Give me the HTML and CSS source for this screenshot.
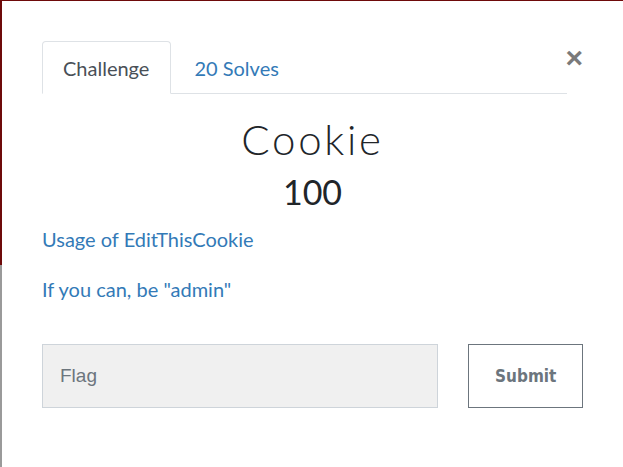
FILE: index.html
```html
<!DOCTYPE html>
<html>
<head>
<meta charset="utf-8">
<link rel="stylesheet" href="styles.css">
</head>
<body>
<div class="modal">
  <div class="head">
    <ul class="tabs">
      <li class="tab active">Challenge</li>
      <li class="tab">20 Solves</li>
    </ul>
    <button class="close">&times;</button>
  </div>
  <h1 class="title">Cookie</h1>
  <div class="value">100</div>
  <p class="desc"><a href="#">Usage of EditThisCookie</a></p>
  <p class="desc"><a href="#">If you can, be "admin"</a></p>
  <form class="submit-row">
    <input class="flag" type="text" placeholder="Flag">
    <button class="submit" type="button">Submit</button>
  </form>
</div>
</body>
</html>
```
FILE: styles.css
```css
html, body {
  margin: 0;
  height: 100%;
}
body {
  background: linear-gradient(to bottom, #6e0a0a 0, #6e0a0a 265px, #9a9a9a 265px, #9a9a9a 100%);
  font-family: Lato, "Open Sans", sans-serif;
  overflow: hidden;
}
.modal {
  margin: 1px 0 0 2px;
  background: #fff;
  height: 466px;
  box-sizing: border-box;
  padding: 40px 40px 0 40px;
}
.head {
  display: flex;
  align-items: flex-start;
}
.tabs {
  list-style: none;
  margin: 0;
  padding: 0;
  display: flex;
  flex: 1;
  min-width: 0;
  border-bottom: 1px solid #dee2e6;
}
.tab {
  font-size: 20px;
  line-height: 24px;
  padding: 14px 21px 13px 20px;
  color: #337ab7;
  border: 1px solid transparent;
  border-radius: 4px 4px 0 0;
  margin-bottom: -1px;
  margin-right: 2px;
}
.tab.active {
  color: #495057;
  border-color: #dee2e6 #dee2e6 #fff;
  background: #fff;
}
.close {
  flex: 0 0 16px;
  width: 16px;
  min-width: 0;
  margin-top: 2px;
  border: 0;
  background: none;
  padding: 0;
  display: flex;
  justify-content: flex-end;
  overflow: visible;
  white-space: nowrap;
  font-size: 30px;
  line-height: 30px;
  font-weight: 700;
  color: #7a7a7a;
  font-family: "Liberation Sans", Arial, sans-serif;
}
.title {
  margin: 20px 0 0 0;
  text-align: center;
  font-weight: 300;
  font-size: 42px;
  line-height: 50px;
  letter-spacing: 2.7px;
  color: #212529;
}
.value {
  text-align: center;
  font-size: 34px;
  line-height: 44px;
  color: #212529;
  margin-top: 6px;
}
.desc {
  margin: 12px 0 0 0;
  font-size: 20px;
  line-height: 26px;
}
.desc + .desc {
  margin-top: 24px;
}
.desc a {
  color: #337ab7;
  text-decoration: none;
}
.submit-row {
  display: flex;
  margin-top: 42px;
}
.flag {
  width: 398px;
  height: 64px;
  box-sizing: border-box;
  background: #f0f0f0;
  border: 1px solid #ced4da;
  padding: 0 17px;
  font-size: 19px;
  font-family: "Liberation Sans", Arial, sans-serif;
  color: #495057;
  margin: 0;
}
.flag::placeholder {
  color: #6c757d;
}
.submit {
  margin-left: 30px;
  width: 115px;
  height: 64px;
  box-sizing: border-box;
  background: #fff;
  border: 1px solid #6c757d;
  border-radius: 0;
  color: #6c757d;
  font-family: "DejaVu Sans Condensed", "DejaVu Sans", sans-serif;
  font-weight: 700;
  font-size: 17px;
}
```
